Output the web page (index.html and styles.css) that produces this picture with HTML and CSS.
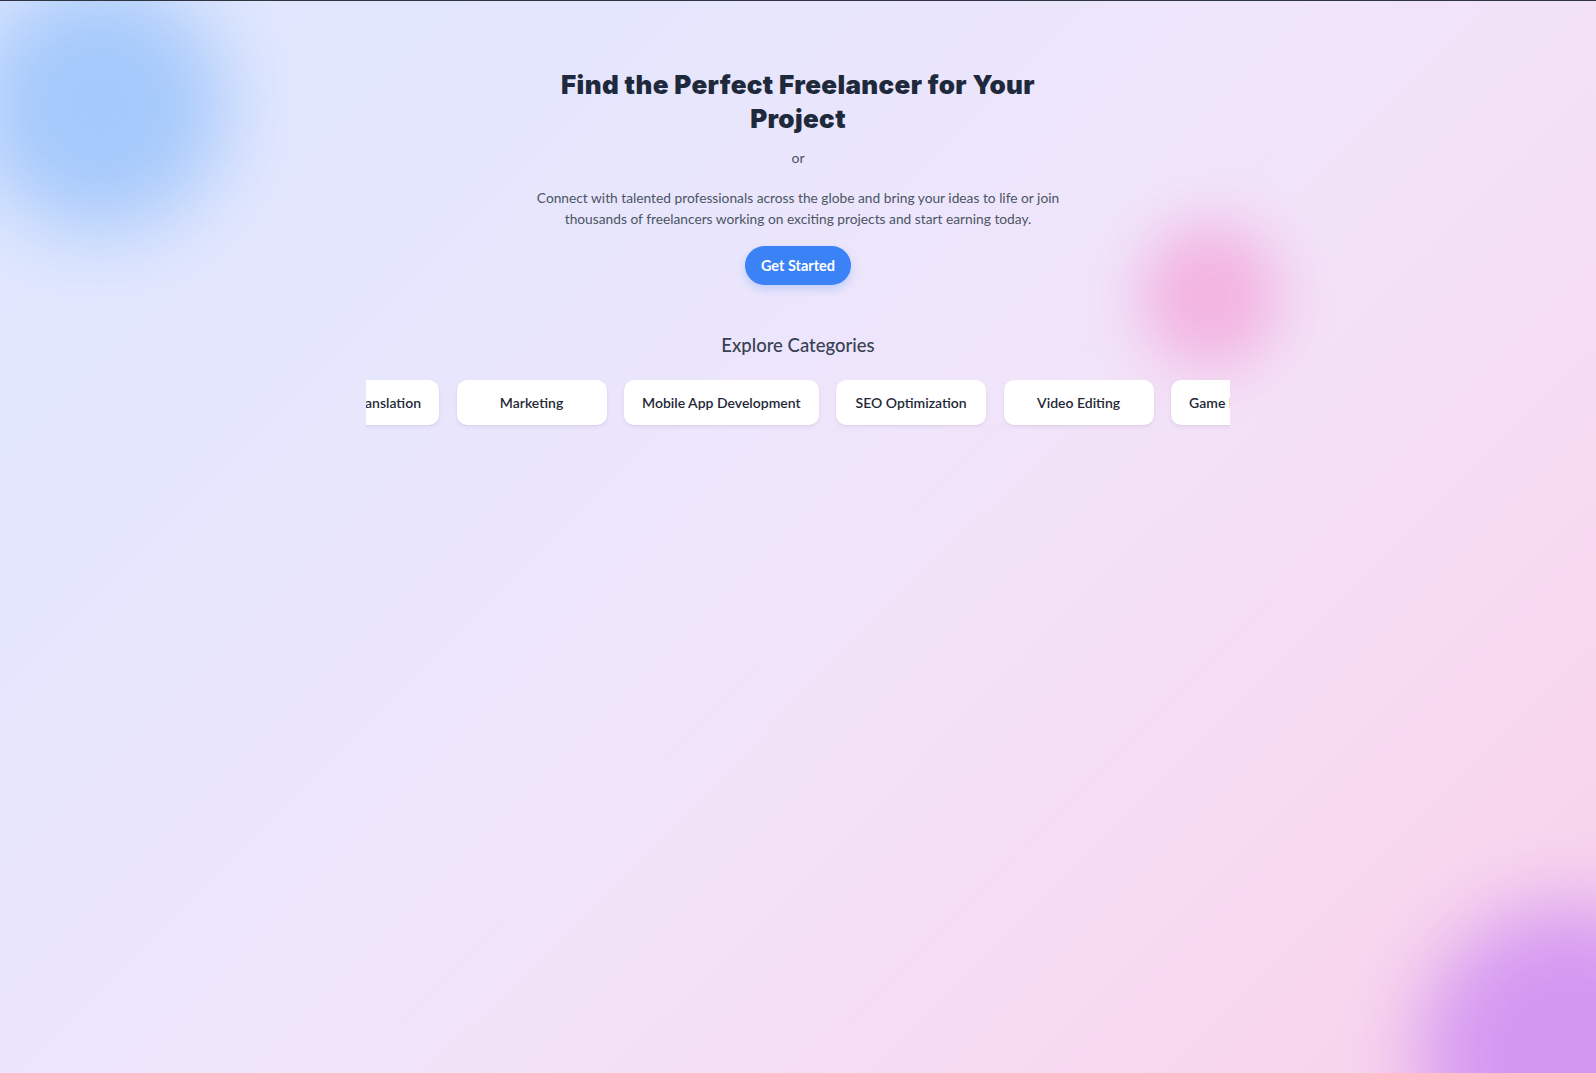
FILE: index.html
```html
<!DOCTYPE html>
<html lang="en">
<head>
<meta charset="utf-8">
<title>Find the Perfect Freelancer</title>
<link rel="stylesheet" href="styles.css">
</head>
<body>
<div class="page">
  <div class="blob blob-blue"></div>
  <div class="blob blob-pink"></div>
  <div class="blob blob-purple"></div>

  <main class="hero">
    <h1 class="title">Find the Perfect Freelancer for Your Project</h1>
    <p class="or">or</p>
    <p class="lead">Connect with talented professionals across the globe and bring your ideas to life or join thousands of freelancers working on exciting projects and start earning today.</p>
    <button class="cta">Get Started</button>

    <section class="categories">
      <h2 class="cat-title">Explore Categories</h2>
      <div class="marquee">
        <div class="track">
          <div class="card">Language Translation</div>
          <div class="card">Marketing</div>
          <div class="card">Mobile App Development</div>
          <div class="card">SEO Optimization</div>
          <div class="card">Video Editing</div>
          <div class="card">Game Development</div>
          <div class="card">Web Development</div>
        </div>
      </div>
    </section>
  </main>
</div>
</body>
</html>
```

FILE: styles.css
```css
html, body {
  margin: 0;
  padding: 0;
  height: 100%;
}

body {
  font-family: "Lato", "Liberation Sans", sans-serif;
  color: #1f2937;
  border-top: 1px solid #2e3440;
  box-sizing: border-box;
  overflow: hidden;
}

.page {
  position: relative;
  min-height: 1072px;
  overflow: hidden;
  background: linear-gradient(135deg, #dde7fe 0%, #e6e6fd 28%, #f0e5fb 50%, #f6dcf2 75%, #f9d0ea 100%);
}

.blob {
  position: absolute;
  border-radius: 50%;
  pointer-events: none;
}

.blob-blue {
  left: -25px;
  top: -20px;
  width: 250px;
  height: 250px;
  background: #9ec6fb;
  filter: blur(40px);
  opacity: 0.9;
}

.blob-pink {
  left: 1140px;
  top: 222px;
  width: 140px;
  height: 145px;
  background: #f3aedf;
  filter: blur(30px);
  opacity: 0.9;
}

.blob-purple {
  left: 1420px;
  top: 905px;
  width: 300px;
  height: 300px;
  background: #d294f2;
  filter: blur(40px);
  opacity: 0.95;
}

.hero {
  position: relative;
  display: flex;
  flex-direction: column;
  align-items: center;
  text-align: center;
  padding-top: 67px;
}

.title {
  margin: 0;
  max-width: 540px;
  font-family: "Inter", "Roboto", sans-serif;
  font-weight: 900;
  font-size: 26px;
  line-height: 34px;
  letter-spacing: 0.35px;
  color: #1e293b;
}

.or {
  margin: 12px 0 0;
  font-size: 14px;
  line-height: 20px;
  color: #4b5563;
}

.lead {
  margin: 19px 0 0;
  max-width: 560px;
  font-size: 13.75px;
  line-height: 21px;
  color: #4b5563;
}

.cta {
  margin-top: 17px;
  height: 39px;
  padding: 0 16px;
  border: none;
  border-radius: 999px;
  background: #3b82f6;
  color: #ffffff;
  font-family: "Lato", sans-serif;
  font-weight: 700;
  font-size: 14.5px;
  box-shadow: 0 4px 8px rgba(59, 130, 246, 0.25);
  cursor: pointer;
}

.categories {
  width: 864px;
  margin-top: 47px;
  display: flex;
  flex-direction: column;
  align-items: center;
}

.cat-title {
  margin: 0;
  font-size: 18.5px;
  line-height: 26px;
  font-weight: 500;
  color: #374151;
}

.marquee {
  width: 100%;
  margin-top: 22px;
  overflow: hidden;
  padding-bottom: 8px;
}

.track {
  display: flex;
  gap: 17.5px;
  margin-left: -93px;
}

.card {
  flex: none;
  box-sizing: border-box;
  min-width: 150px;
  height: 45px;
  padding: 0 18px;
  display: flex;
  align-items: center;
  justify-content: center;
  background: #ffffff;
  border-radius: 10px;
  box-shadow: 0 2px 4px rgba(80, 60, 120, 0.07), 0 1px 2px rgba(0, 0, 0, 0.04);
  font-size: 14px;
  font-weight: 600;
  color: #1f2937;
  white-space: nowrap;
}
```
